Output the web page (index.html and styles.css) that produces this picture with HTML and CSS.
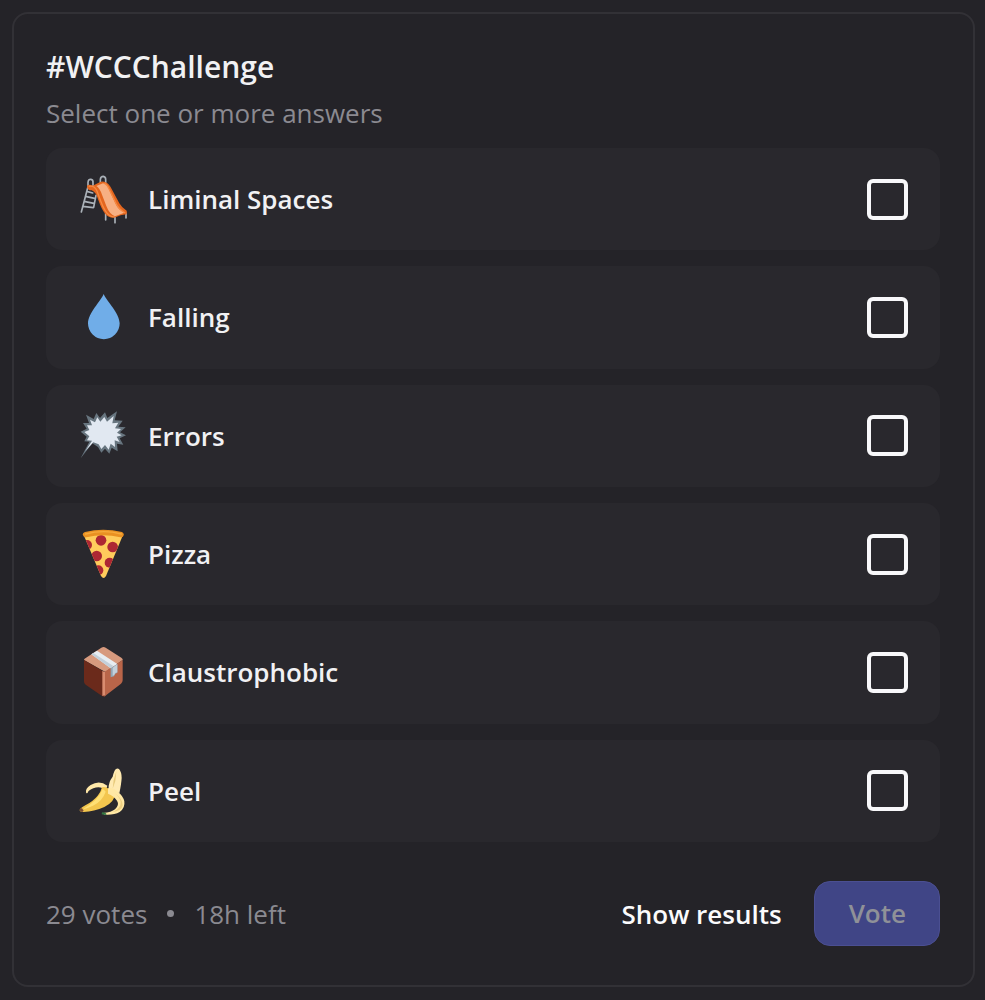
FILE: index.html
```html
<!DOCTYPE html>
<html lang="en">
<head>
<meta charset="utf-8">
<meta name="viewport" content="width=device-width, initial-scale=1">
<title>#WCCChallenge</title>
<link rel="stylesheet" href="styles.css">
</head>
<body>
<form class="poll">
  <header class="head">
    <h1 class="title">#WCCChallenge</h1>
    <p class="hint">Select one or more answers</p>
  </header>
  <div class="answers">
    <label class="answer">
      <svg class="emoji" viewBox="24 30 150 150" aria-hidden="true">
        <g fill="none" stroke="#aab1b8" stroke-linecap="round">
          <path stroke-width="5" d="M54 66V55q1-10 9-9 7 1 6 11v9M91 56V46q1-9 9-9 7 1 7 9v10"/>
          <path stroke-width="5" d="M54 68L34 144M78 94L71 130M50 82l18 5M46 97l28 6M42 112l30 6M38 127l32 4M107 148v20M135 158v18M168 148v14"/>
        </g>
        <path fill="#e3661f" d="M51 65q7-5 17 0l15-7q12-9 24-3 11 5 18 20l23 43q8 14 22 22 3 8-2 12-12-2-31 8-17 5-31-10-12-15-21-42-7-24-20-29-14 0-14-14z"/>
        <path fill="#f7b083" d="M79 66l20-8q12 2 20 23l18 39q8 18 26 26l-28 11q-17-7-26-31l-13-34q-7-20-17-26z"/>
        <path fill="none" stroke="#f78a42" stroke-width="4" d="M56 67q17-4 24 12l13 34q11 30 25 41 8 6 16 4M103 58q9 3 14 16l20 42q8 19 29 31"/>
      </svg>
      <span class="name">Liminal Spaces</span>
      <input class="box" type="checkbox" name="answer" value="liminal">
    </label>
    <label class="answer">
      <svg class="emoji" viewBox="24 30 150 150" aria-hidden="true">
        <path fill="#70ade8" d="M101 36C92 58 54 93 54 124a47 47 0 0 0 95 0C149 93 110 58 101 36z"/>
      </svg>
      <span class="name">Falling</span>
      <input class="box" type="checkbox" name="answer" value="falling">
    </label>
    <label class="answer">
      <svg class="emoji" viewBox="24 30 150 150" aria-hidden="true">
        <path fill="#67757f" d="M32 172L58 122L43 121L50 107L32 92L50 83L39 66L57 66L48 41L71 54L79 36L90 51L105 34L112 51L141 31L134 58L158 59L145 77L167 79L150 94L168 103L149 112L160 131L141 128L143 151L125 140L118 158L105 143L94 155L84 138L67 127z"/>
        <path fill="#e1e8f1" d="M46 150L66 119L51 118L58 106L43 93L58 87L51 73L66 73L60 56L75 64L82 49L91 62L103 48L111 62L131 45L127 67L145 65L135 82L153 84L141 95L155 103L140 107L149 123L134 118L135 138L122 128L116 146L105 132L94 144L86 130L70 124z"/>
      </svg>
      <span class="name">Errors</span>
      <input class="box" type="checkbox" name="answer" value="errors">
    </label>
    <label class="answer">
      <svg class="emoji" viewBox="24 30 150 150" aria-hidden="true">
        <clipPath id="slice"><path d="M42 50q58-18 116 0l-50 121q-7 12-15 0z"/></clipPath>
        <path fill="#ffcc5c" d="M42 50q58-18 116 0l-50 121q-7 12-15 0z"/>
        <g fill="#ad2733" clip-path="url(#slice)">
          <circle cx="93" cy="64" r="16"/><circle cx="128" cy="84" r="16"/><circle cx="51" cy="78" r="15"/>
          <circle cx="80" cy="111" r="16"/><circle cx="119" cy="131" r="15"/><circle cx="85" cy="154" r="15"/>
        </g>
        <path fill="#e99122" d="M39 49q-3-7 6-10 54-13 111 0 7 4 5 10-2 8-10 6-51-13-102 0-8 1-10-6z"/>
        <path fill="none" stroke="#f6aa3b" stroke-width="4" stroke-linecap="round" d="M47 45q54-14 107 0"/>
      </svg>
      <span class="name">Pizza</span>
      <input class="box" type="checkbox" name="answer" value="pizza">
    </label>
    <label class="answer">
      <svg class="emoji" viewBox="24 30 150 150" aria-hidden="true">
        <path fill="#d79a7e" d="M42 69q0-3 4-5l48-32q7-4 13 0l47 30q5 3 4 7l-52 36z"/>
        <path fill="#6b2a1b" d="M42 69l61 36v74q-4 0-8-3l-48-33q-5-4-5-9z"/>
        <path fill="#b96549" d="M158 69v61q0 6-5 10l-44 34q-3 3-6 5v-74z"/>
        <path fill="#d98c70" d="M97 102l8 3v70l-8 2z"/>
        <path fill="#e7edf2" d="M64 52l17-11 61 40-20 13z"/>
        <path fill="#c3d0da" d="M64 52l6-4 60 39-8 7z"/>
        <path fill="#91a6b6" d="M122 94l20-13v26l-6 3-4 8-10 3z"/>
        <path fill="#c3d0da" d="M128 92l14-10v24l-6 2-4 7-4 1z"/>
      </svg>
      <span class="name">Claustrophobic</span>
      <input class="box" type="checkbox" name="answer" value="claustrophobic">
    </label>
    <label class="answer">
      <svg class="emoji" viewBox="24 30 150 150" aria-hidden="true">
        <path fill="#ffe8a8" d="M48 109q-2-12 14-22 26-16 50 2l-5 15q-15-16-37-7-14 5-17 13-4 4-5-1z"/>
        <path fill="#ffeab1" d="M116 98q-1-20 12-36 4-18 10-23 5-3 9 0 8 9 8 27-1 18-7 46z"/>
        <path fill="#e7ca7b" d="M139 46l-8 27-3 25 8-23z"/>
        <path fill="#f3c64e" d="M96 94q10-3 21 5l19 10q-1 29-33 44-31 14-62 15-12 0-12-6 0-4 17-14 24-13 37-29 9-10 13-25z"/>
        <path fill="#ffe076" d="M98 99q6 3 9 8-10 29-38 42-16 8-30 10 45-25 59-60z"/>
        <path fill="#ffe8a5" d="M114 97q15-5 29 10 17 13 20 29 3 20-14 32-17 10-46 8l-4-5q26-2 36-11 14-14 6-26-10-15-27-21z"/>
        <path fill="#edcf81" d="M133 110q24 19 18 38-8 16-25 20 29-2 32-20 1-19-25-38z"/>
        <path fill="#7b4b32" d="M29 159q3-3 7-2l5 7-4 4q-8-1-8-9z"/>
        <path fill="#347943" d="M96 169l10 1 4 5-4 2-11-2z"/>
      </svg>
      <span class="name">Peel</span>
      <input class="box" type="checkbox" name="answer" value="peel">
    </label>
  </div>
  <footer class="foot">
    <p class="stats"><span>29 votes</span><span class="dot"></span><span>18h left</span></p>
    <button class="results" type="button">Show results</button>
    <button class="vote" type="submit" disabled>Vote</button>
  </footer>
</form>
</body>
</html>
```
FILE: styles.css
```css
* {
  box-sizing: border-box;
}

body {
  margin: 0;
  min-height: 100vh;
  display: flex;
  padding: 12px 10px 13px 12px;
  background: #242328;
  color: #f1f1f3;
  font-family: "Open Sans", "Noto Sans", sans-serif;
  font-size: 26px;
  line-height: 36px;
}

.poll {
  flex: 1;
  display: flex;
  flex-direction: column;
  padding: 32px 33px 32px 32px;
  border: 2px solid #323136;
  border-radius: 16px;
  background: #242328;
}

.title {
  margin: 0;
  font-size: 30px;
  font-weight: 600;
  line-height: 42px;
}

.hint {
  margin: 7px 0 17px;
  color: #8b8a91;
}

.answers {
  flex: 1;
  display: grid;
  grid-auto-rows: 1fr;
  gap: 16px;
}

.answer {
  display: flex;
  align-items: center;
  gap: 20px;
  padding: 24px 32px;
  border-radius: 16px;
  background: #29282d;
  cursor: pointer;
}

.emoji {
  width: 50px;
  height: 50px;
  flex: none;
}

.name {
  flex: 1;
  font-weight: 600;
}

.box {
  appearance: none;
  flex: none;
  width: 41px;
  height: 41px;
  margin: 0;
  border: 4px solid #f8f8fa;
  border-radius: 6px;
  cursor: pointer;
}

.box:checked {
  background: #5865f2;
}

.foot {
  display: flex;
  align-items: center;
  gap: 32px;
  padding: 39px 0 7px;
}

.stats {
  flex: 1;
  display: flex;
  align-items: center;
  gap: 20px;
  margin: 0;
  color: #8b8a91;
}

.dot {
  width: 7px;
  height: 7px;
  border-radius: 50%;
  background: currentColor;
}

.results,
.vote {
  font: inherit;
  font-weight: 600;
  border: 0;
  cursor: pointer;
}

.results {
  padding: 0;
  background: none;
  color: #fbfbfc;
}

.vote {
  padding: 13px 33px 14px 34px;
  border: 1px solid #4b4f92;
  border-radius: 16px;
  background: #404586;
  color: #8f9198;
  cursor: default;
}
```
